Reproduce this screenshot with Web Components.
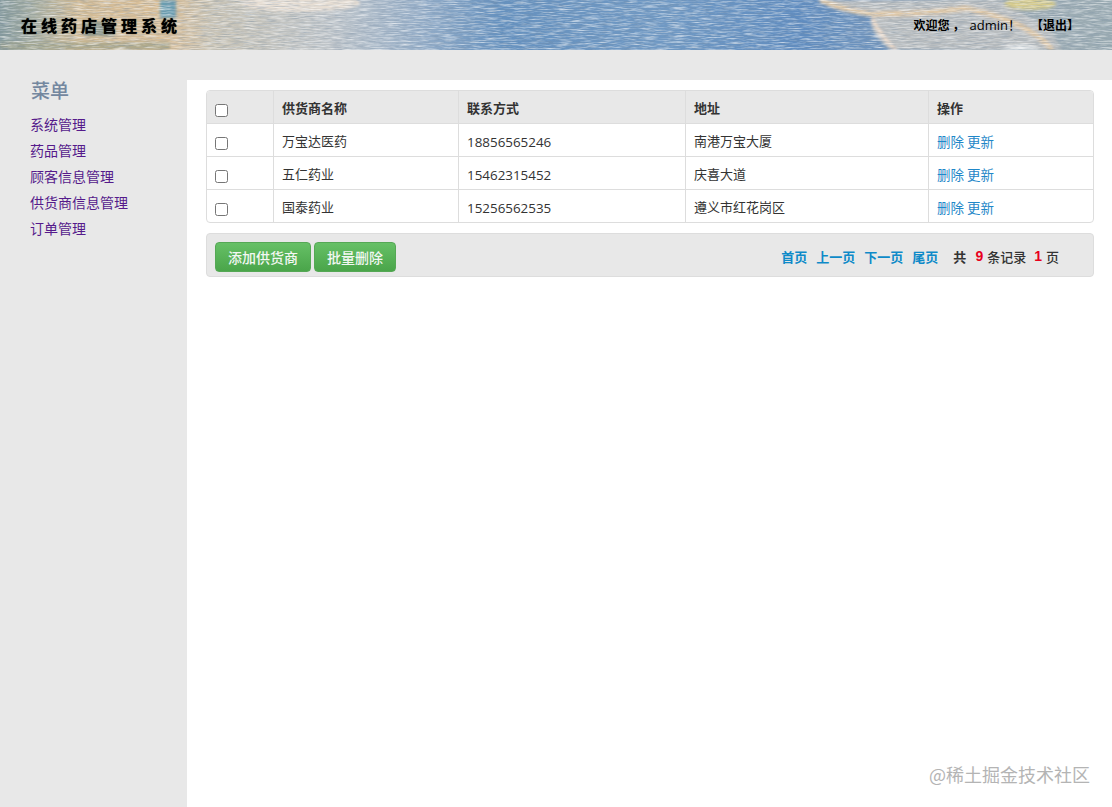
<!DOCTYPE html>
<html lang="zh">
<head>
<meta charset="utf-8">
<title>在线药店管理系统</title>
<style>
  html, body { margin: 0; height: 100%; }
  body {
    background: #e8e8e8;
    font-family: "Open Sans", "Noto Sans CJK SC", sans-serif;
    font-size: 13px;
    color: #333;
  }
  #app { display: flex; flex-direction: column; height: 807px; overflow: hidden; }
  #main { display: flex; flex: 1; min-height: 0; }
</style>
</head>
<body>
<div id="app">
  <app-header title="在线药店管理系统" user="admin"></app-header>
  <div id="main">
    <side-menu heading="菜单">
      <a href="#">系统管理</a>
      <a href="#">药品管理</a>
      <a href="#">顾客信息管理</a>
      <a href="#">供货商信息管理</a>
      <a href="#">订单管理</a>
    </side-menu>
    <content-pane>
      <supplier-table></supplier-table>
      <tool-bar>
        <green-button>添加供货商</green-button>
        <green-button>批量删除</green-button>
        <page-info slot="right" total="9" pages="1"></page-info>
      </tool-bar>
    </content-pane>
  </div>
</div>

<script>
class AppHeader extends HTMLElement {
    constructor() {
        super();
        this.shadow = this.attachShadow({mode:"open"});
    }
    connectedCallback(){
        this.shadow.innerHTML = `
        <style>
            :host { display: block; height: 50px; flex: none; position: relative; overflow: hidden; background: #8fa6bd; }
            svg { position: absolute; left: 0; top: 0; }
            .bar { position: relative; height: 100%; display: flex; align-items: center; justify-content: space-between; padding: 0 33px 0 21px; }
            h1 { margin: 0 0 1px; font: 700 16px "Noto Sans CJK SC", sans-serif; letter-spacing: 4px; color: #000; text-shadow: 0 0 1px #000; }
            .user { font: 700 12px "Noto Sans CJK SC", sans-serif; color: #000; display: flex; align-items: center; margin-bottom: 1px; }
            .name { font: 13px "Open Sans", "Noto Sans CJK SC", sans-serif; margin-right: 10px; }
            .comma { margin: 0 5px 0 3px; }
        </style>
        <svg width="1112" height="50" viewBox="0 0 1112 50">
            <defs>
                <linearGradient id="base" x1="0" x2="1" y1="0" y2="0">
                    <stop offset="0" stop-color="#84999c"/>
                    <stop offset=".03" stop-color="#a3ab9f"/>
                    <stop offset=".07" stop-color="#d2bb95"/>
                    <stop offset=".15" stop-color="#d9be97"/>
                    <stop offset=".19" stop-color="#c9c3b4"/>
                    <stop offset=".3" stop-color="#bfc5ca"/>
                    <stop offset=".38" stop-color="#94adc8"/>
                    <stop offset=".45" stop-color="#6591bf"/>
                    <stop offset=".6" stop-color="#7099c4"/>
                    <stop offset=".72" stop-color="#5f8cc0"/>
                    <stop offset=".8" stop-color="#7396bd"/>
                    <stop offset=".88" stop-color="#a0adb6"/>
                    <stop offset="1" stop-color="#9aabb2"/>
                </linearGradient>
                <filter id="streak" x="0" y="0" width="100%" height="100%">
                    <feTurbulence type="fractalNoise" baseFrequency="0.07 0.85" numOctaves="3" seed="7"/>
                    <feColorMatrix type="matrix" values="0 0 0 0 1  0 0 0 0 1  0 0 0 0 1  2.2 0 0 0 -0.95"/>
                </filter>
                <filter id="streakDark" x="0" y="0" width="100%" height="100%">
                    <feTurbulence type="fractalNoise" baseFrequency="0.09 0.9" numOctaves="2" seed="21"/>
                    <feColorMatrix type="matrix" values="0 0 0 0 .2  0 0 0 0 .28  0 0 0 0 .38  2 0 0 0 -0.85"/>
                </filter>
                <filter id="soft"><feGaussianBlur stdDeviation="1.6"/></filter>
            </defs>
            <rect width="1112" height="50" fill="url(#base)"/>
            <g filter="url(#soft)">
                <rect x="160" y="0" width="16" height="18" fill="#6a9db0"/>
                <rect x="85" y="22" width="30" height="14" fill="#6f8885" opacity=".7"/>
                <rect x="0" y="42" width="170" height="8" fill="#a0a288" opacity=".7"/>
                <ellipse cx="300" cy="3" rx="60" ry="9" fill="#e6ddd2"/>
                <path d="M818 0 H1000 L1050 30 L1062 50 H890 Q866 30 872 16 Q830 12 818 0Z" fill="#b9bdbf"/>
                <path d="M820 0 Q850 12 872 14 Q930 14 965 8 Q1030 22 1052 50" fill="none" stroke="#e2c9a6" stroke-width="5"/>
                <path d="M872 18 Q880 36 896 50" fill="none" stroke="#efdccb" stroke-width="3.5"/>
                <ellipse cx="1030" cy="4" rx="26" ry="6" fill="#d6cb8c"/>
                <path d="M1000 50 Q1020 38 1042 50Z" fill="#e3e6e7"/>
            </g>
            <rect width="1112" height="50" filter="url(#streakDark)" opacity=".5"/>
            <rect width="1112" height="50" filter="url(#streak)" opacity=".65"/>
        </svg>
        <div class="bar">
            <h1>${this.getAttribute("title")}</h1>
            <div class="user"><span>欢迎您</span><span class="comma">，</span><span class="name">${this.getAttribute("user")}！</span><span>【退出】</span></div>
        </div>
        `;
    }
}
customElements.define("app-header", AppHeader);

class SideMenu extends HTMLElement {
    constructor() {
        super();
        this.shadow = this.attachShadow({mode:"open"});
    }
    connectedCallback(){
        this.shadow.innerHTML = `
        <style>
            :host { display: block; width: 187px; flex: none; box-sizing: border-box; padding: 27px 0 0 30px; }
            h2 { margin: 0 0 8px 1px; font: 500 19px/26px "Noto Sans CJK SC", serif; color: #74879f; }
            .items { display: flex; flex-direction: column; }
            ::slotted(a) { font: 14px/26px "Noto Sans CJK SC", sans-serif; color: #551a8b; text-decoration: none; }
        </style>
        <h2>${this.getAttribute("heading")}</h2>
        <div class="items"><slot></slot></div>
        `;
    }
}
customElements.define("side-menu", SideMenu);

class ContentPane extends HTMLElement {
    constructor() {
        super();
        this.shadow = this.attachShadow({mode:"open"});
    }
    connectedCallback(){
        this.shadow.innerHTML = `
        <style>
            :host { display: flex; flex-direction: column; gap: 10px; flex: 1; margin-top: 30px; background: #fff; padding: 10px 18px 0 19px; position: relative; }
            .mark { position: absolute; right: 22px; bottom: 21px; font: 18px/24px "Noto Sans CJK SC", sans-serif; color: #b4b4b4; }
        </style>
        <slot></slot>
        <div class="mark">@稀土掘金技术社区</div>
        `;
    }
}
customElements.define("content-pane", ContentPane);

const SUPPLIERS = [
    ["万宝达医药", "18856565246", "南港万宝大厦"],
    ["五仁药业", "15462315452", "庆喜大道"],
    ["国泰药业", "15256562535", "遵义市红花岗区"]
];

class SupplierTable extends HTMLElement {
    constructor() {
        super();
        this.shadow = this.attachShadow({mode:"open"});
    }
    connectedCallback(){
        const rows = SUPPLIERS.map(r => `
            <tr>
                <td><input type="checkbox"></td>
                <td>${r[0]}</td>
                <td class="num">${r[1]}</td>
                <td>${r[2]}</td>
                <td class="ops"><a href="#">删除</a> <a href="#">更新</a></td>
            </tr>`).join("");
        this.shadow.innerHTML = `
        <style>
            :host { display: block; }
            table { width: 888px; box-sizing: border-box; table-layout: fixed; border-collapse: separate; border-spacing: 0; border: 1px solid #ddd; border-radius: 4px; overflow: hidden; font: 13px "Noto Sans CJK SC", sans-serif; color: #333; }
            th, td { height: 33px; padding: 2px 8px 0; box-sizing: border-box; text-align: left; border-left: 1px solid #ddd; border-top: 1px solid #ddd; line-height: 18px; }
            th { height: 32px; background: #e8e8e8; font-weight: 700; border-top: 0; }
            th:first-child, td:first-child { border-left: 0; }
            td.num { font: 13.4px "Open Sans", sans-serif; padding-top: 4px; }
            input { margin: 4px 0 0 0; width: 13px; height: 13px; display: block; }
            .ops { font-size: 13.5px; }
            a { color: #1f87c8; text-decoration: none; }
        </style>
        <table>
            <colgroup><col style="width:66px"><col style="width:185px"><col style="width:227px"><col style="width:243px"><col></colgroup>
            <thead>
                <tr>
                    <th><input type="checkbox"></th>
                    <th>供货商名称</th>
                    <th>联系方式</th>
                    <th>地址</th>
                    <th>操作</th>
                </tr>
            </thead>
            <tbody>${rows}</tbody>
        </table>
        `;
    }
}
customElements.define("supplier-table", SupplierTable);

class ToolBar extends HTMLElement {
    constructor() {
        super();
        this.shadow = this.attachShadow({mode:"open"});
    }
    connectedCallback(){
        this.shadow.innerHTML = `
        <style>
            :host { display: flex; align-items: center; justify-content: space-between; box-sizing: border-box; width: 888px; height: 44px; padding: 0 34px 0 8px; background: #e8e8e8; border: 1px solid #ddd; border-radius: 4px; }
            .left { display: flex; gap: 3px; margin-top: 4px; }
        </style>
        <div class="left"><slot></slot></div>
        <slot name="right"></slot>
        `;
    }
}
customElements.define("tool-bar", ToolBar);

class GreenButton extends HTMLElement {
    constructor() {
        super();
        this.shadow = this.attachShadow({mode:"open"});
    }
    connectedCallback(){
        this.shadow.innerHTML = `
        <style>
            :host { display: block; }
            button { height: 30px; padding: 0 12px; border: 1px solid #55a855; border-radius: 4px; background: linear-gradient(#66c066, #4aa54a); color: #f2f7f2; font: 500 14px "Noto Sans CJK SC", sans-serif; cursor: pointer; }
        </style>
        <button><slot></slot></button>
        `;
    }
}
customElements.define("green-button", GreenButton);

class PageInfo extends HTMLElement {
    constructor() {
        super();
        this.shadow = this.attachShadow({mode:"open"});
    }
    connectedCallback(){
        this.shadow.innerHTML = `
        <style>
            :host { display: flex; align-items: center; font: 700 13px "Noto Sans CJK SC", sans-serif; color: #333; margin-top: 2px; }
            a { color: #0e8ac8; text-decoration: none; margin-right: 9px; }
            .total { margin-left: 6px; }
            b { font-family: "Liberation Sans", sans-serif; color: #e8001c; margin: 0 4px 0 9px; font-size: 14px; }
            .pages { margin-left: 8px; }
            .thin { font-weight: 500; }
        </style>
        <a href="#">首页</a><a href="#">上一页</a><a href="#">下一页</a><a href="#">尾页</a>
        <span class="total">共</span><b>${this.getAttribute("total")}</b><span class="thin">条记录</span>
        <b class="pages">${this.getAttribute("pages")}</b><span class="thin">页</span>
        `;
    }
}
customElements.define("page-info", PageInfo);
</script>
</body>
</html>
